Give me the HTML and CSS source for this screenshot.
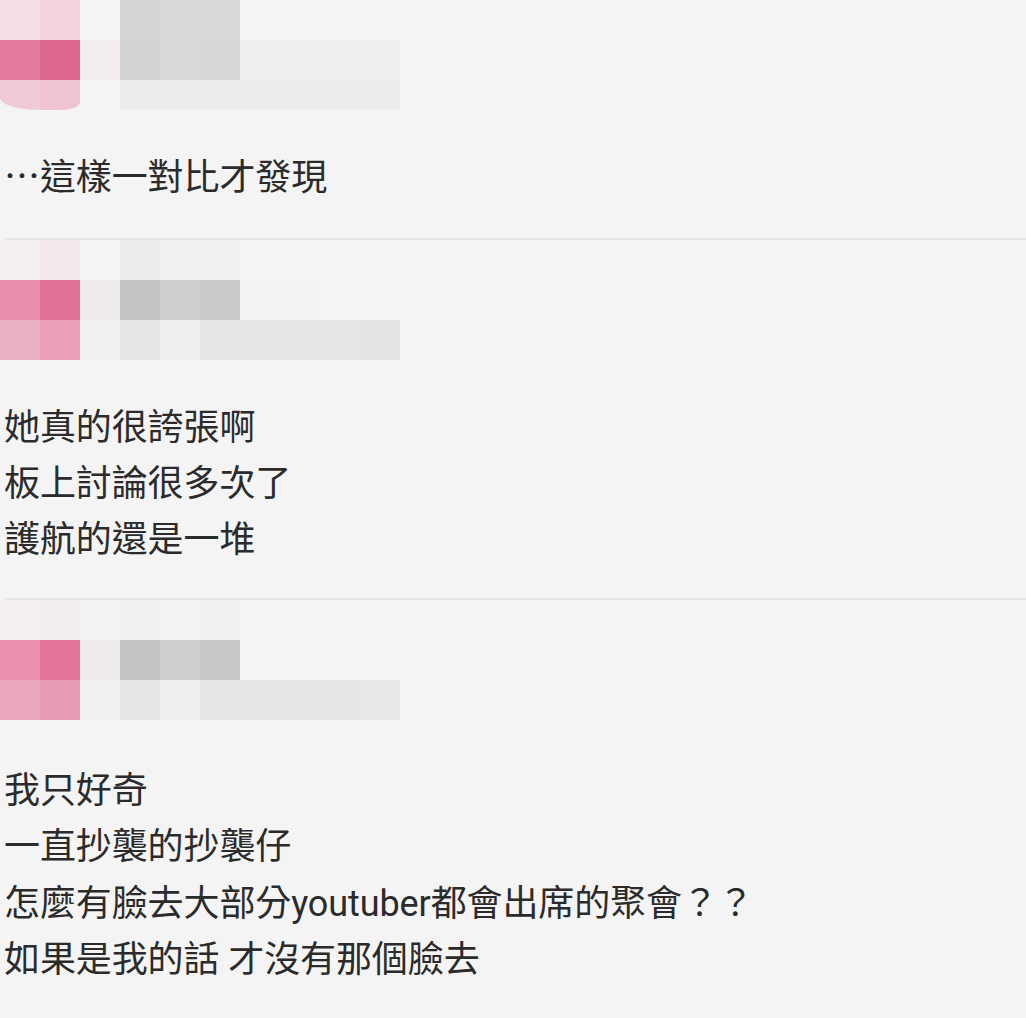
FILE: index.html
```html
<!DOCTYPE html>
<html lang="zh-Hant">
<head>
<meta charset="utf-8">
<title>留言</title>
<link rel="stylesheet" href="styles.css">
</head>
<body>
<main class="thread">
  <section class="comment comment--first">
    <div class="mosaic">
      <div class="row row--top">
        <span class="px a1"></span><span class="px a2"></span><span class="px"></span><span class="px g6"></span><span class="px ga"></span><span class="px ga"></span>
      </div>
      <div class="row">
        <span class="px pk1"></span><span class="px pk2"></span><span class="px w1"></span><span class="px g3"></span><span class="px ga"></span><span class="px g8"></span><span class="px ef"></span><span class="px ef"></span><span class="px ef"></span><span class="px ef"></span>
      </div>
      <div class="row row--short">
        <span class="px lp1 round-l"></span><span class="px lp2 round-r"></span><span class="px"></span><span class="px ec"></span><span class="px ec"></span><span class="px ec"></span><span class="px ec"></span><span class="px ec"></span><span class="px ec"></span><span class="px ec"></span>
      </div>
    </div>
    <p class="text"><span class="cjk">…</span>這樣一對比才發現</p>
  </section>

  <section class="comment comment--second">
    <div class="mosaic">
      <div class="row row--fade">
        <span class="px b1"></span><span class="px b2"></span><span class="px"></span><span class="px ed"></span><span class="px f0"></span><span class="px f0"></span>
      </div>
      <div class="row">
        <span class="px pk3"></span><span class="px pk4"></span><span class="px w2"></span><span class="px c4"></span><span class="px cf"></span><span class="px ca"></span><span class="px f3"></span><span class="px f3"></span>
      </div>
      <div class="row">
        <span class="px lp3"></span><span class="px lp4"></span><span class="px f1"></span><span class="px e6"></span><span class="px efl"></span><span class="px e6"></span><span class="px e6"></span><span class="px e6"></span><span class="px e6"></span><span class="px e3"></span>
      </div>
    </div>
    <p class="text">她真的很誇張啊<br>板上討論很多次了<br>護航的還是一堆</p>
  </section>

  <section class="comment comment--third">
    <div class="mosaic">
      <div class="row">
        <span class="px b3"></span><span class="px b4"></span><span class="px f3b"></span><span class="px f1"></span><span class="px f2"></span><span class="px f1"></span>
      </div>
      <div class="row">
        <span class="px pk5"></span><span class="px pk6"></span><span class="px w3"></span><span class="px c3"></span><span class="px ce"></span><span class="px c8"></span>
      </div>
      <div class="row">
        <span class="px lp5"></span><span class="px lp6"></span><span class="px w4"></span><span class="px e7"></span><span class="px efl"></span><span class="px e5"></span><span class="px e6"></span><span class="px e6"></span><span class="px e6"></span><span class="px e9"></span>
      </div>
    </div>
    <p class="text">我只好奇<br>一直抄襲的抄襲仔<br>怎麼有臉去大部分youtuber都會出席的聚會？？<br>如果是我的話 才沒有那個臉去</p>
  </section>
</main>
</body>
</html>
```

FILE: styles.css
```css
html, body {
  margin: 0;
  padding: 0;
  background: #f4f4f4;
}

.thread {
  width: 1026px;
  font-family: Roboto, "Noto Sans CJK TC", "Noto Sans CJK SC", sans-serif;
  color: #2b2b2b;
}

.comment {
  display: flex;
  flex-direction: column;
  border-bottom: 2px solid #e6e6e6;
  margin-left: 4px;
}

.comment:last-child {
  border-bottom: none;
}

.mosaic {
  display: flex;
  flex-direction: column;
  margin-left: -4px;
}

.row {
  display: flex;
  height: 40px;
}

.row--short {
  height: 30px;
}

.px {
  width: 40px;
  height: 100%;
  flex: none;
}

.round-l { border-bottom-left-radius: 40px 12px; }
.round-r { border-bottom-right-radius: 20px 8px; }

/* pinks */
.a1 { background: #f4dde3; }
.a2 { background: #f3d2dc; }
.pk1 { background: #e27b9c; }
.pk2 { background: #de678f; }
.lp1 { background: #f0cad6; }
.lp2 { background: #efc3d2; }
.b1 { background: #f3eff0; }
.b2 { background: #f4e9ed; }
.pk3 { background: #e98fac; }
.pk4 { background: #e07399; }
.lp3 { background: #eab0c3; }
.lp4 { background: #eaa1b9; }
.b3 { background: #f3eeef; }
.b4 { background: #f3ecee; }
.pk5 { background: #eb90ad; }
.pk6 { background: #e0749a; }
.lp5 { background: #eaa8bf; }
.lp6 { background: #e99ab4; }

/* whites / greys */
.w1 { background: #f2ecee; }
.w2 { background: #efeaeb; }
.w3 { background: #f0ebec; }
.w4 { background: #f3f0f1; }
.g6 { background: #d6d6d6; }
.ga { background: #dadada; }
.g3 { background: #d3d3d3; }
.g8 { background: #d8d8d8; }
.ef { background: #efefef; }
.ec { background: #ececec; }
.ed { background: #ededed; }
.f0 { background: #f0f0f0; }
.f1 { background: #f1f1f1; }
.f2 { background: #f2f2f2; }
.f3 { background: #f3f3f3; }
.f3b { background: #f3f3f3; }
.c3 { background: #c3c3c3; }
.c4 { background: #c4c4c4; }
.c8 { background: #c8c8c8; }
.ca { background: #cacaca; }
.ce { background: #cecece; }
.cf { background: #cfcfcf; }
.e3 { background: #e3e3e3; }
.e5 { background: #e5e5e5; }
.e6 { background: #e6e6e6; }
.e7 { background: #e7e7e7; }
.e9 { background: #e9e9e9; }
.efl { background: #efefef; }

.text {
  margin: 0;
  font-size: 36px;
  line-height: 56px;
  letter-spacing: -0.1px;
}

.cjk {
  font-family: "Noto Sans CJK TC", sans-serif;
  line-height: 1;
}

.comment--first .text {
  margin-top: 40px;
  margin-bottom: 32px;
}

.comment--second .text {
  margin-top: 40px;
  margin-bottom: 30px;
}

.comment--third .text {
  margin-top: 43px;
  line-height: 56.3px;
}
```
